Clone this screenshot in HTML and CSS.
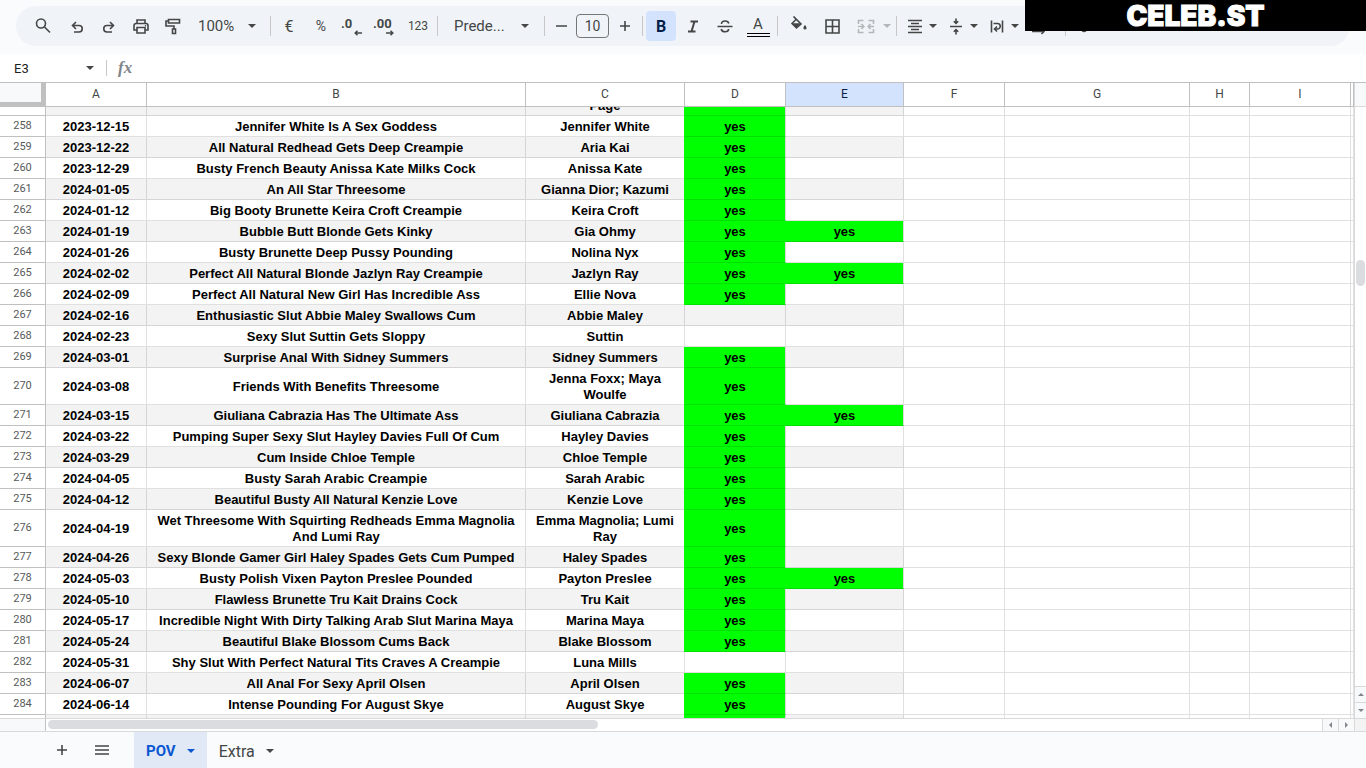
FILE: index.html
```html
<!DOCTYPE html>
<html lang="es">
  <head>
    <meta charset="UTF-8" />
    <meta name="viewport" content="width=device-width, initial-scale=1.0" />
    <title>POV</title>
    <link rel="stylesheet" href="styles.css">
  </head>
  <body>
    <header class="top">
      <div class="toolbar">
        <button class="tool search" aria-label="Buscar">
          <svg class="icon" viewBox="0 0 20 20"><circle cx="8" cy="7.500" r="4.500" /><path d="M11.500 11 17 16.500" /></svg>
        </button>
        <button class="tool" aria-label="Deshacer">
          <svg class="icon" viewBox="0 0 20 20"><path d="M9 6 5.500 9.500 9 13M5.500 9.500H12a3.200 3.200 0 0 1 0 6.500H7" /></svg>
        </button>
        <button class="tool" aria-label="Rehacer">
          <svg class="icon" viewBox="0 0 20 20"><path d="M11 6l3.500 3.500L11 13M14.500 9.500H8A3.200 3.200 0 0 0 8 16h5" /></svg>
        </button>
        <button class="tool" aria-label="Imprimir">
          <svg class="icon" viewBox="0 0 20 20"><path d="M6 7.500V4h8v3.500M6 14H3V9.500a2 2 0 0 1 2-2h10a2 2 0 0 1 2 2V14h-3M6 11.500h8V17H6z" /><circle class="fill" cx="14.500" cy="9.800" r=".8" /></svg>
        </button>
        <button class="tool" aria-label="Copiar formato">
          <svg class="icon" viewBox="0 0 20 20"><path d="M5.500 3.500h11v3.500h-11zM5.500 5H3v5h8v3M9.500 13h3v4.500h-3z" /></svg>
        </button>
        <button class="tool zoom"><span>100%</span><i class="caret"></i></button>
        <span class="sep"></span>
        <button class="tool money">€</button>
        <button class="tool">%</button>
        <button class="tool decimal" aria-label="Reducir decimales"><span>.0</span>
          <svg class="arrow" viewBox="0 0 8 6"><path d="M8 3H2M3.500.8 1.200 3l2.300 2.200" /></svg>
        </button>
        <button class="tool decimal" aria-label="Aumentar decimales"><span>.00</span>
          <svg class="arrow" viewBox="0 0 8 6"><path d="M0 3h6M4.500.8 6.800 3 4.500 5.200" /></svg>
        </button>
        <button class="tool formats">123</button>
        <span class="sep"></span>
        <button class="tool font"><span>Prede...</span><i class="caret"></i></button>
        <span class="sep"></span>
        <button class="tool minus" aria-label="Reducir">
          <svg class="icon" viewBox="0 0 20 20"><path d="M5 10h11" /></svg>
        </button>
        <input class="size" type="text" value="10" aria-label="Tamaño de fuente" />
        <button class="tool plus" aria-label="Aumentar">
          <svg class="icon" viewBox="0 0 20 20"><path d="M5 10h10M10 5v10" /></svg>
        </button>
        <span class="sep"></span>
        <button class="tool bold">B</button>
        <button class="tool" aria-label="Cursiva">
          <svg class="icon heavy" viewBox="0 0 20 20"><path d="M7.500 5.500H15M5 15.500h7.500M11.500 5.500l-3 10" /></svg>
        </button>
        <button class="tool" aria-label="Tachado">
          <svg class="icon" viewBox="0 0 20 20"><path d="M2.500 10.500h15M13.800 7.500C13.500 5.800 12 5 10 5S6.500 6 6.500 8M6.200 13c.3 1.800 1.800 2.700 3.800 2.700s3.600-1 3.600-2.700" /></svg>
        </button>
        <button class="tool color"><span>A</span></button>
        <span class="sep"></span>
        <button class="tool bucket" aria-label="Color de relleno">
          <svg class="icon" viewBox="0 0 20 20"><path d="M5.500.5 13 8 8.500 12 4 7.500 8 3.500" /><path class="fill" d="M4 7.300h9L8.500 12zM17 9s1.600 1.900 1.600 2.900a1.600 1.600 0 0 1-3.200 0c0-1 1.600-2.900 1.600-2.900z" /></svg>
        </button>
        <button class="tool" aria-label="Bordes">
          <svg class="icon" viewBox="0 0 20 20"><path d="M4 4h13v13H4zM10.500 4v13M4 10.500h13" /></svg>
        </button>
        <button class="tool merge" aria-label="Combinar celdas" disabled>
          <svg class="icon" viewBox="0 0 20 20"><path d="M7.500 4.500h-5V8M7.500 16.500h-5V13M12.500 4.500h5V8M12.500 16.500h5V13M2 10.500h5M5.500 8l2.300 2.500L5.500 13M18 10.500h-5M14.500 8l-2.300 2.500 2.300 2.500" /></svg>
          <i class="caret"></i>
        </button>
        <span class="sep"></span>
        <button class="tool drop" aria-label="Alineación horizontal">
          <svg class="icon" viewBox="0 0 20 20"><path d="M3 4.500h14M6 7.500h8M3 10.500h14M6 13.500h8M3 16.500h14" /></svg>
          <i class="caret"></i>
        </button>
        <button class="tool drop" aria-label="Alineación vertical">
          <svg class="icon" viewBox="0 0 20 20"><path d="M4 10.500h12M10 2.500V7M7.800 5.200 10 7.400l2.200-2.200M10 18.500V14M7.800 15.800l2.200-2.200 2.200 2.200" /></svg>
          <i class="caret"></i>
        </button>
        <button class="tool drop" aria-label="Ajuste de texto">
          <svg class="icon" viewBox="0 0 20 20"><path d="M4.500 4.500v12M15.500 4.500v12M6.500 7.500h4a2.500 2.500 0 0 1 0 5.500H8M10 10.500 7.500 13l2.500 2.500" /></svg>
          <i class="caret"></i>
        </button>
        <button class="tool drop" aria-label="Rotación de texto">
          <svg class="icon" viewBox="0 0 20 20"><path d="M4 15.500h12M13.500 13l2.500 2.500-2.500 2.500M4 12 8 4l4 8" /></svg>
          <i class="caret"></i>
        </button>
        <span class="sep"></span>
        <button class="tool link" aria-label="Insertar enlace">
          <svg class="icon" viewBox="0 0 20 20"><path d="M9 12.500 6.500 15a3 3 0 0 1-4-4L6 7.500M11 7.500 13.500 5a3 3 0 0 1 4 4L14 12.500M7.500 12.500l5-5" /></svg>
        </button>
      </div>
      <div class="banner">CELEB.ST</div>
    </header>

    <div class="formula">
      <input class="name" type="text" value="E3" aria-label="Cuadro de nombres" />
      <button class="pick" aria-label="Rangos"><i class="caret"></i></button>
      <span class="line"></span>
      <label class="fx" for="fx">fx</label>
      <input class="content" type="text" id="fx" />
    </div>

    <main class="sheet">
      <div class="cells">
        <table class="grid head">
          <tr>
            <th class="corner w-num"></th>
            <th class="w-a">A</th>
            <th class="w-b">B</th>
            <th class="w-c">C</th>
            <th class="w-d">D</th>
            <th class="w-e active">E</th>
            <th class="w-f">F</th>
            <th class="w-g">G</th>
            <th class="w-h">H</th>
            <th class="w-i">I</th>
            <th></th>
          </tr>
        </table>
        <div class="view">
          <table class="grid body">
            <colgroup>
              <col class="w-num"><col class="w-a"><col class="w-b"><col class="w-c"><col class="w-d"><col class="w-e">
              <col class="w-f"><col class="w-g"><col class="w-h"><col class="w-i"><col>
            </colgroup>
            <tbody id="rows"></tbody>
          </table>
        </div>
      </div>
      <div class="vscroll">
        <div class="vtop"></div>
        <div class="vtrack"><div class="vthumb"></div></div>
        <button aria-label="Arriba"><i class="tri up"></i></button>
        <button aria-label="Abajo"><i class="tri down"></i></button>
      </div>
    </main>

    <div class="hscroll">
      <div class="hleft"></div>
      <div class="htrack"><div class="hthumb"></div></div>
      <button aria-label="Izquierda"><i class="tri left"></i></button>
      <button aria-label="Derecha"><i class="tri right"></i></button>
      <div class="hend"></div>
    </div>

    <footer class="tabs">
      <button class="tabicon" aria-label="Añadir hoja">
        <svg class="icon" viewBox="0 0 20 20"><path d="M5 10h10M10 5v10" /></svg>
      </button>
      <button class="tabicon" aria-label="Todas las hojas">
        <svg class="icon" viewBox="0 0 20 20"><path d="M3 6h14M3 10h14M3 14h14" /></svg>
      </button>
      <button class="tab selected"><span>POV</span><i class="caret"></i></button>
      <button class="tab"><span>Extra</span><i class="caret"></i></button>
    </footer>

    <script>
      // fecha, titulo, nombre, columna D, columna E
      const data = [
        ["", "", "Page", 1, 0],
        ["2023-12-15", "Jennifer White Is A Sex Goddess", "Jennifer White", 1, 0],
        ["2023-12-22", "All Natural Redhead Gets Deep Creampie", "Aria Kai", 1, 0],
        ["2023-12-29", "Busty French Beauty Anissa Kate Milks Cock", "Anissa Kate", 1, 0],
        ["2024-01-05", "An All Star Threesome", "Gianna Dior; Kazumi", 1, 0],
        ["2024-01-12", "Big Booty Brunette Keira Croft Creampie", "Keira Croft", 1, 0],
        ["2024-01-19", "Bubble Butt Blonde Gets Kinky", "Gia Ohmy", 1, 1],
        ["2024-01-26", "Busty Brunette Deep Pussy Pounding", "Nolina Nyx", 1, 0],
        ["2024-02-02", "Perfect All Natural Blonde Jazlyn Ray Creampie", "Jazlyn Ray", 1, 1],
        ["2024-02-09", "Perfect All Natural New Girl Has Incredible Ass", "Ellie Nova", 1, 0],
        ["2024-02-16", "Enthusiastic Slut Abbie Maley Swallows Cum", "Abbie Maley", 0, 0],
        ["2024-02-23", "Sexy Slut Suttin Gets Sloppy", "Suttin", 0, 0],
        ["2024-03-01", "Surprise Anal With Sidney Summers", "Sidney Summers", 1, 0],
        ["2024-03-08", "Friends With Benefits Threesome", "Jenna Foxx; Maya Woulfe", 1, 0],
        ["2024-03-15", "Giuliana Cabrazia Has The Ultimate Ass", "Giuliana Cabrazia", 1, 1],
        ["2024-03-22", "Pumping Super Sexy Slut Hayley Davies Full Of Cum", "Hayley Davies", 1, 0],
        ["2024-03-29", "Cum Inside Chloe Temple", "Chloe Temple", 1, 0],
        ["2024-04-05", "Busty Sarah Arabic Creampie", "Sarah Arabic", 1, 0],
        ["2024-04-12", "Beautiful Busty All Natural Kenzie Love", "Kenzie Love", 1, 0],
        ["2024-04-19", "Wet Threesome With Squirting Redheads Emma Magnolia And Lumi Ray", "Emma Magnolia; Lumi Ray", 1, 0],
        ["2024-04-26", "Sexy Blonde Gamer Girl Haley Spades Gets Cum Pumped", "Haley Spades", 1, 0],
        ["2024-05-03", "Busty Polish Vixen Payton Preslee Pounded", "Payton Preslee", 1, 1],
        ["2024-05-10", "Flawless Brunette Tru Kait Drains Cock", "Tru Kait", 1, 0],
        ["2024-05-17", "Incredible Night With Dirty Talking Arab Slut Marina Maya", "Marina Maya", 1, 0],
        ["2024-05-24", "Beautiful Blake Blossom Cums Back", "Blake Blossom", 1, 0],
        ["2024-05-31", "Shy Slut With Perfect Natural Tits Craves A Creampie", "Luna Mills", 0, 0],
        ["2024-06-07", "All Anal For Sexy April Olsen", "April Olsen", 1, 0],
        ["2024-06-14", "Intense Pounding For August Skye", "August Skye", 1, 0],
        ["", "", "", 1, 0],
      ];

      const first = 257;
      const last = first + data.length - 1;
      let html = "";

      data.forEach((row, i) => {
        const n = first + i;
        const edge = n == first || n == last;
        const yes = (on) => (on ? `<td class="yes">${edge ? "" : "yes"}</td>` : "<td></td>");
        html += `<tr class="${n % 2 ? "odd" : ""}"><th>${edge ? "" : n}</th>`;
        html += `<td>${row[0]}</td><td>${row[1]}</td><td>${row[2]}</td>`;
        html += yes(row[3]) + yes(row[4]);
        html += "<td></td><td></td><td></td><td></td><td></td></tr>";
      });

      document.getElementById("rows").innerHTML = html;
    </script>
  </body>
</html>
```
FILE: styles.css
```css
* {
  padding: 0;
  margin: 0;
  box-sizing: border-box;
}

body {
  display: flex;
  flex-direction: column;
  height: 100vh;
  overflow: hidden;
  background-color: #fff;
  font-family: Roboto, sans-serif;
  color: #444746;
}

button,
input {
  border: none;
  background: none;
  color: inherit;
  font-family: inherit;
}

input:focus {
  outline: none;
}

.icon {
  width: 20px;
  height: 20px;
  flex: none;
  fill: none;
  stroke: currentColor;
  stroke-width: 1.6;
}

.icon .fill {
  fill: currentColor;
  stroke: none;
}

.heavy {
  stroke-width: 2;
}

.caret {
  border: 4px solid transparent;
  border-top-color: currentColor;
  border-bottom: none;
}

/* toolbar */

.top {
  position: relative;
  flex: none;
  padding: 6px 16px 8px;
  background-color: #f9fbfd;
}

.toolbar {
  display: flex;
  align-items: center;
  gap: 2px;
  height: 40px;
  padding: 0 10px;
  border-radius: 20px;
  background-color: #f0f4f9;
  overflow: hidden;
}

.tool {
  display: flex;
  justify-content: center;
  align-items: center;
  flex: none;
  width: 30px;
  height: 30px;
  border-radius: 4px;
  font-size: 14px;
}

.search {
  width: 34px;
}

.sep {
  flex: none;
  width: 1px;
  height: 20px;
  margin: 0 1px;
  background-color: #c7c7c7;
}

.zoom {
  justify-content: space-between;
  width: 77px;
  padding: 0 11px 0 8px;
  font-size: 15px;
}

.money {
  font-size: 16px;
}

.decimal {
  flex-direction: column;
  align-items: flex-end;
  padding: 0 6px 0 3px;
  font-size: 13px;
  font-weight: bold;
  line-height: 13px;
}

.decimal span {
  width: 100%;
  text-align: left;
}

.arrow {
  width: 8px;
  height: 6px;
  fill: none;
  stroke: currentColor;
  stroke-width: 1.5;
}

.formats {
  width: 32px;
  font-size: 12px;
}

.font {
  justify-content: space-between;
  width: 100px;
  padding: 0 12px 0 13px;
  font-size: 15px;
}

.minus {
  width: 26px;
}

.plus {
  width: 28px;
}

.size {
  flex: none;
  width: 33px;
  height: 24px;
  border: 1px solid #747775;
  border-radius: 4px;
  text-align: center;
  font-size: 14px;
}

.bold {
  background-color: #d3e3fd;
  color: #041e49;
  font-size: 16px;
  font-weight: bold;
}

.color {
  width: 32px;
}

.color span {
  width: 23px;
  border-bottom: 4px double #000;
  font-size: 15px;
  line-height: 17px;
}

.bucket {
  width: 34px;
}

.merge {
  justify-content: flex-start;
  width: 44px;
  gap: 7px;
  padding-left: 7px;
  color: #b4b7b9;
}

.drop {
  justify-content: flex-start;
  width: 39px;
  gap: 4px;
  padding-left: 5px;
}

.link {
  width: 40px;
}

.banner {
  position: absolute;
  top: 0;
  right: 0;
  width: 341px;
  height: 31px;
  background-color: #000;
  color: #fff;
  font-family: Inter, sans-serif;
  font-size: 28px;
  font-weight: 900;
  line-height: 32px;
  text-align: center;
  -webkit-text-stroke: 1px #fff;
}

/* formula bar */

.formula {
  display: flex;
  align-items: center;
  flex: none;
  height: 28px;
  color: #1f1f1f;
}

.name {
  width: 80px;
  padding-left: 14px;
  font-size: 13px;
}

.pick {
  display: flex;
  justify-content: center;
  width: 20px;
  color: #444746;
}

.line {
  width: 1px;
  height: 16px;
  margin: 0 11px 0 6px;
  background-color: #c7c7c7;
}

.fx {
  color: #80868b;
  font-family: "Liberation Serif", serif;
  font-size: 17px;
  font-style: italic;
  font-weight: bold;
}

.content {
  flex: 1;
  margin-left: 8px;
}

/* sheet */

.sheet {
  display: flex;
  flex: 1;
  min-height: 0;
  border-top: 1px solid #c0c0c0;
}

.cells {
  display: flex;
  flex-direction: column;
  flex: 1;
  min-width: 0;
}

.view {
  flex: 1;
  overflow: hidden;
}

.grid {
  width: 100%;
  table-layout: fixed;
  border-spacing: 0;
}

.w-num { width: 46px; }
.w-a, .w-d, .w-f, .w-i { width: 101px; }
.w-b { width: 379px; }
.w-c { width: 159px; }
.w-e { width: 118px; }
.w-g { width: 185px; }
.w-h { width: 60px; }

.head th {
  height: 24px;
  padding-bottom: 1px;
  border-right: 1px solid #c0c0c0;
  border-bottom: 1px solid #c0c0c0;
  font-size: 12px;
  font-weight: normal;
}

.head .corner {
  border-right: 5px solid #c0c0c0;
  border-bottom: 5px solid #c0c0c0;
  background-color: #f8f9fa;
}

.head .active {
  background-color: #d3e3fd;
  color: #041e49;
}

/* first row is scrolled half out of view */
.body {
  margin-top: -12px;
}

.body th {
  padding-bottom: 1px;
  border-right: 1px solid #c0c0c0;
  border-bottom: 1px solid #c0c0c0;
  color: #575a5a;
  font-size: 11px;
  font-weight: normal;
}

.body td {
  height: 21px;
  padding: 3px 3px 1px;
  border-right: 1px solid rgba(0, 0, 0, 0.12);
  border-bottom: 1px solid rgba(0, 0, 0, 0.12);
  color: #000;
  font-family: "Liberation Sans", Arial, sans-serif;
  font-size: 13px;
  font-weight: bold;
  line-height: 16px;
  text-align: center;
}

.odd td:nth-child(-n + 6) {
  background-color: #f3f3f3;
}

.body .yes,
.odd .yes:nth-child(-n + 6) {
  border-right-color: #d9d9d9;
  background-color: #0f0;
  box-shadow: -1px 0 #0f0;
}

/* scrollbars */

.vscroll {
  display: flex;
  flex-direction: column;
  flex: none;
  width: 12px;
  border-left: 1px solid #d9d9d9;
}

.vtop {
  height: 24px;
  border-bottom: 1px solid #d9d9d9;
  background-color: #f8f9fa;
}

.vtrack {
  flex: 1;
  padding-left: 1px;
}

.vthumb {
  width: 9px;
  height: 26px;
  margin-top: 153px;
  border-radius: 5px;
  background-color: #dadce0;
}

.vscroll button,
.hscroll button {
  display: flex;
  justify-content: center;
  align-items: center;
  background-color: #f8f9fa;
  color: #80868b;
}

.vscroll button {
  height: 16px;
  border-top: 1px solid #d9d9d9;
}

.tri {
  border: 3px solid transparent;
}

.up {
  border-top: none;
  border-bottom-color: currentColor;
}

.down {
  border-bottom: none;
  border-top-color: currentColor;
}

.left {
  border-left: none;
  border-right-color: currentColor;
}

.right {
  border-right: none;
  border-left-color: currentColor;
}

.hscroll {
  display: flex;
  flex: none;
  height: 14px;
  border-top: 1px solid #d9d9d9;
  border-bottom: 1px solid #d9d9d9;
}

.hleft {
  width: 46px;
  border-right: 1px solid #c0c0c0;
  background-color: #f8f9fa;
}

.htrack {
  flex: 1;
  padding: 1px 2px;
}

.hthumb {
  width: 550px;
  height: 9px;
  border-radius: 5px;
  background-color: #dadce0;
}

.hscroll button {
  width: 16px;
  border-left: 1px solid #d9d9d9;
}

.hend {
  width: 12px;
  border-left: 1px solid #d9d9d9;
  background-color: #f3f3f3;
}

/* sheet tabs */

.tabs {
  display: flex;
  flex: none;
  height: 36px;
  padding-left: 42px;
  background-color: #f9fbfd;
}

.tabicon {
  display: flex;
  justify-content: center;
  align-items: center;
  width: 40px;
}

.tabicon + .tab {
  margin-left: 12px;
}

.tab {
  display: flex;
  align-items: center;
  gap: 11px;
  padding: 2px 12px 0;
  font-size: 16px;
}

.tab.selected {
  background-color: #e1e9f7;
  color: #0b57d0;
  font-size: 15px;
  font-weight: bold;
}
```
